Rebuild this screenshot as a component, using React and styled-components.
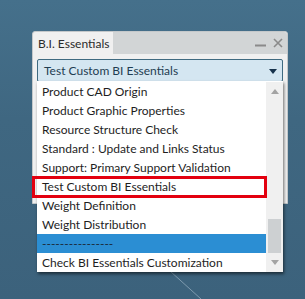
import React from "react";
import styled, { createGlobalStyle } from "styled-components";

const Global = createGlobalStyle`
  html, body { margin: 0; padding: 0; }
  body {
    width: 305px; height: 299px; overflow: hidden;
    background: linear-gradient(180deg, #45708b 0%, #3f6781 40%, #3c627c 100%);
    font-family: Lato, "Noto Sans", sans-serif;
  }
`;

const Stage = styled.div`
  position: relative;
  width: 305px;
  height: 299px;
  padding: 31px 0 0 32px;
  box-sizing: border-box;
`;

const BgLine = styled.svg`
  position: absolute;
  left: 0; top: 0;
  pointer-events: none;
`;

const Panel = styled.div`
  position: relative;
  width: 256px;
  height: 173px;
  background: #f0f0f0;
  border: 1px solid #c4c8ca;
  border-radius: 3px 3px 0 0;
  box-sizing: border-box;
  display: flex;
  flex-direction: column;
`;

const Header = styled.div`
  height: 22px;
  display: flex;
  align-items: stretch;
  background: #d2d5d6;
  border-radius: 3px 3px 0 0;
`;

const Tab = styled.div`
  width: 80px;
  background: #f0f0f0;
  color: #2b2b2b;
  font-size: 12px;
  display: flex;
  align-items: center;
  padding-left: 5px;
  box-sizing: border-box;
  border-top-left-radius: 3px;
  white-space: nowrap;
`;

const HeaderTools = styled.div`
  margin-left: auto;
  display: flex;
  align-items: center;
  gap: 7px;
  padding-right: 4px;
`;

const Body = styled.div`
  padding: 5px 4px 0 4px;
`;

const Combo = styled.div`
  height: 23px;
  box-sizing: border-box;
  border: 1px solid #3f6a80;
  border-radius: 2px;
  background: #d4e6f1;
  display: flex;
  align-items: center;
  padding: 0 5px 0 6px;
  color: #1f3d52;
  font-size: 12px;
  white-space: nowrap;
`;

const ComboArrow = styled.span`
  margin-left: auto;
  width: 0; height: 0;
  border-left: 4px solid transparent;
  border-right: 4px solid transparent;
  border-top: 5px solid #16324c;
  margin-top: 2px;
`;

const DropList = styled.div`
  position: absolute;
  left: 4px;
  top: 49px;
  width: 246px;
  height: 191px;
  background: #ffffff;
  box-shadow: 1px 2px 3px rgba(0, 0, 0, 0.55);
  display: flex;
  padding-top: 1px;
  box-sizing: border-box;
`;

const Items = styled.div`
  flex: 1;
  display: flex;
  flex-direction: column;
  position: relative;
`;

const Item = styled.div`
  height: 19px;
  display: flex;
  align-items: center;
  padding-left: 5px;
  font-size: 12px;
  color: ${(p) => (p.$selected ? "#1a2a3a" : "#1e1e1e")};
  background: ${(p) => (p.$selected ? "#2b8ed3" : "transparent")};
  white-space: nowrap;
`;

const Scrollbar = styled.div`
  width: 17px;
  background: #f0f0f0;
  display: flex;
  flex-direction: column;
  align-items: center;
`;

const ArrowBtn = styled.div`
  height: 19px;
  display: flex;
  align-items: center;
  justify-content: center;
  width: 100%;
`;

const Tri = styled.span`
  width: 0; height: 0;
  border-left: 4px solid transparent;
  border-right: 4px solid transparent;
  ${(p) => (p.$up ? "border-bottom: 5px solid #a3a3a3;" : "border-top: 5px solid #a3a3a3;")}
`;

const Track = styled.div`
  flex: 1;
  width: 100%;
  display: flex;
  flex-direction: column;
  align-items: center;
  justify-content: flex-end;
`;

const Thumb = styled.div`
  width: 13px;
  height: 34px;
  background: #cdd0d2;
`;

const Highlight = styled.div`
  position: absolute;
  left: -5px;
  top: 94px;
  width: 235px;
  height: 22px;
  border: 3px solid #e3000f;
  box-sizing: border-box;
  pointer-events: none;
`;

const items = [
  "Product CAD Origin",
  "Product Graphic Properties",
  "Resource Structure Check",
  "Standard : Update and Links Status",
  "Support: Primary Support Validation",
  "Test Custom BI Essentials",
  "Weight Definition",
  "Weight Distribution",
  "----------------",
  "Check BI Essentials Customization",
];

export default function App() {
  return (
    <>
      <Global />
      <Stage>
        <BgLine width="305" height="299">
          <line x1="170" y1="271" x2="201" y2="299" stroke="#8fa9bb" strokeWidth="1" opacity="0.8" />
        </BgLine>
        <Panel>
          <Header>
            <Tab>B.I. Essentials</Tab>
            <HeaderTools>
              <svg width="11" height="10" viewBox="0 0 11 10">
                <rect x="0" y="6.5" width="11" height="2" fill="#8a8a8a" />
              </svg>
              <svg width="10" height="10" viewBox="0 0 10 10">
                <path d="M1 1 L9 9 M9 1 L1 9" stroke="#8a8a8a" strokeWidth="1.6" />
              </svg>
            </HeaderTools>
          </Header>
          <Body>
            <Combo>
              Test Custom BI Essentials
              <ComboArrow />
            </Combo>
          </Body>
          <DropList>
            <Items>
              {items.map((t, i) => (
                <Item key={i} $selected={i === 8}>{t}</Item>
              ))}
              <Highlight />
            </Items>
            <Scrollbar>
              <ArrowBtn><Tri $up /></ArrowBtn>
              <Track>
                <Thumb />
              </Track>
              <ArrowBtn><Tri /></ArrowBtn>
            </Scrollbar>
          </DropList>
        </Panel>
      </Stage>
    </>
  );
}
